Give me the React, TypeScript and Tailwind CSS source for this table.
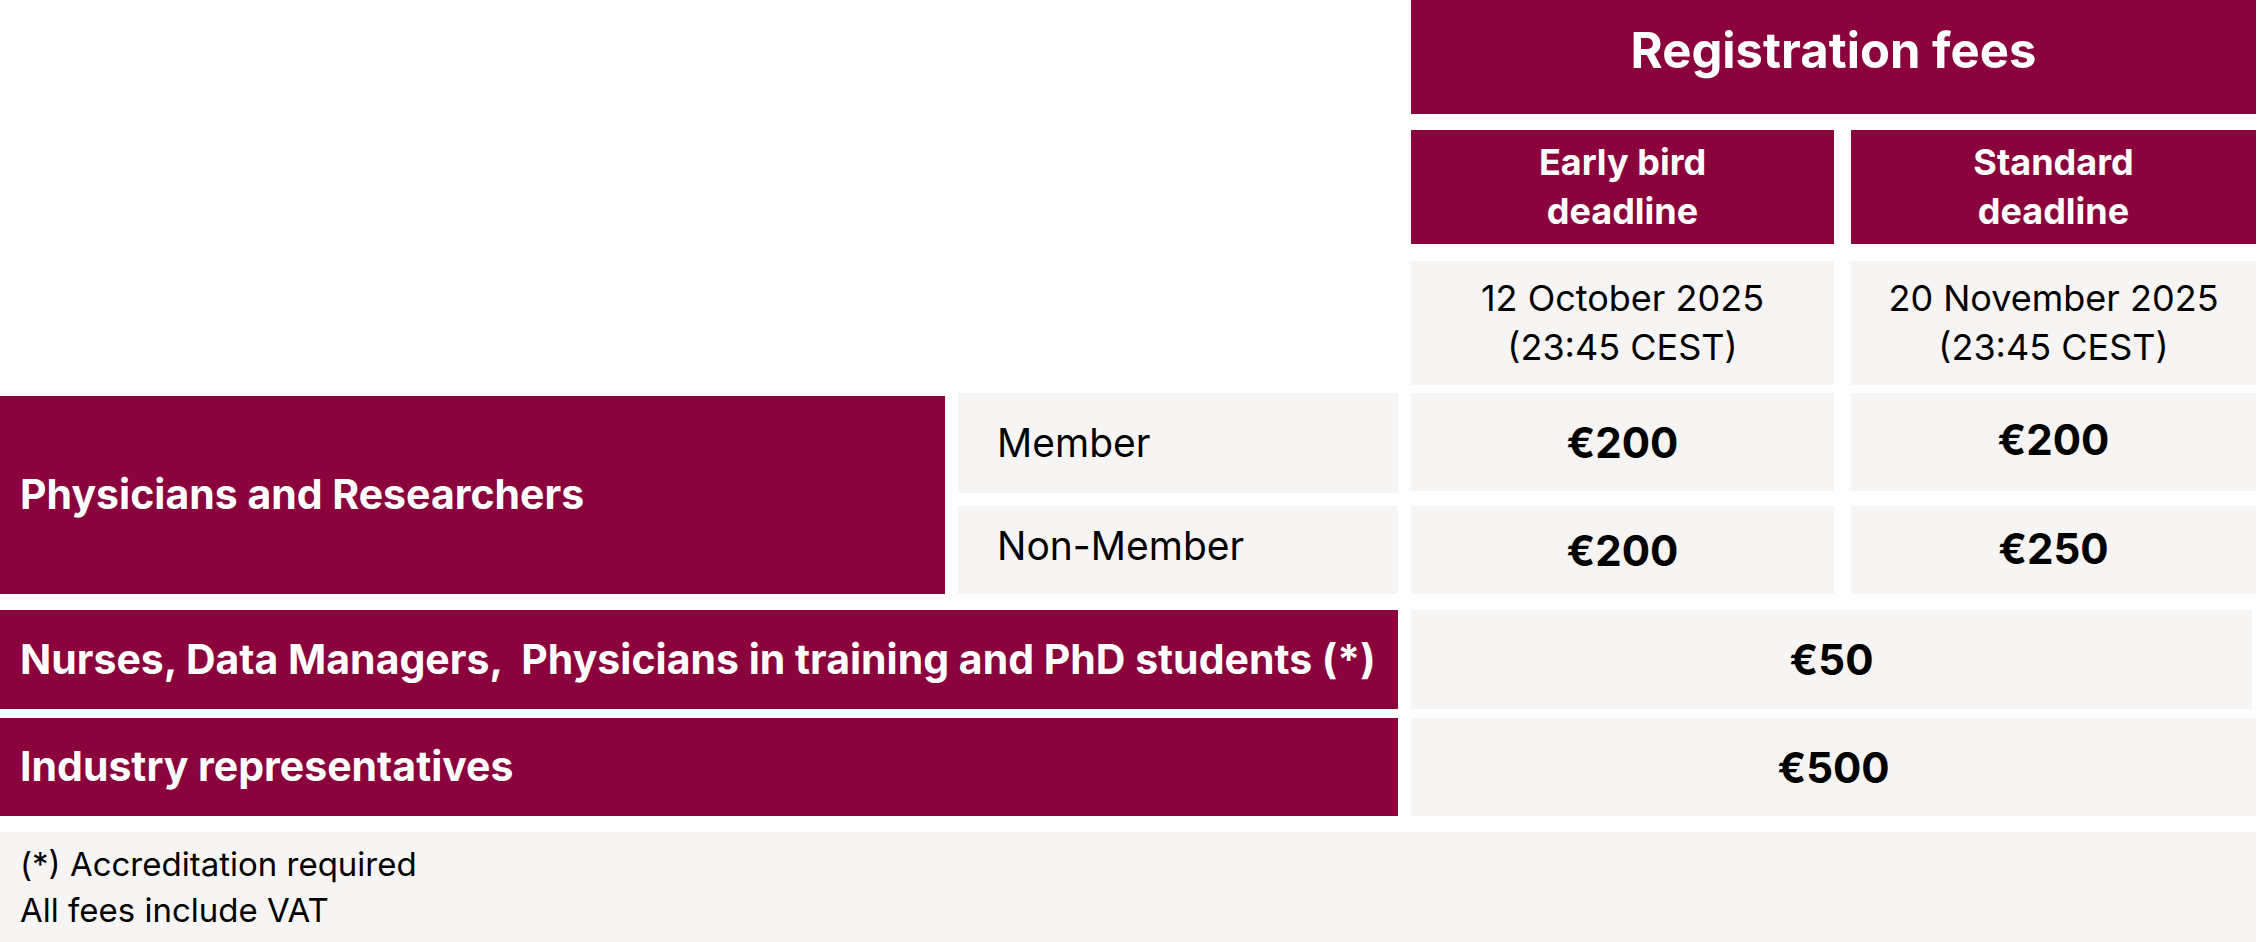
import React from 'react'

const maroon = 'bg-[#8b033c]'
const grey = 'bg-[#f6f5f3]'

function Fee({ value, className = '' }: { value: string; className?: string }) {
    return (
        <div className={`${grey} flex items-center justify-center font-bold text-[42px] text-black ${className}`}>
            {value}
        </div>
    )
}

export default function App() {
    return (
        <div className="w-[2265px] h-[942px] bg-white font-['Inter',sans-serif] text-black overflow-hidden">
            <div className="w-[2256px] flex flex-col">
                {/* header */}
                <div className="flex">
                    <div className="w-[1411px] shrink-0"></div>
                    <div className="flex-1 flex flex-col">
                        <div className={`${maroon} h-[114px] flex items-center justify-center pb-[12px] text-white font-bold text-[49px]`}>
                            Registration fees
                        </div>
                        <div className="flex gap-[17px] mt-[16px] h-[114px]">
                            <div className={`${maroon} w-[423px] flex items-center justify-center text-center text-white font-bold text-[36px] leading-[49px]`}>
                                Early bird<br />deadline
                            </div>
                            <div className={`${maroon} flex-1 flex items-center justify-center text-center text-white font-bold text-[36px] leading-[49px]`}>
                                Standard<br />deadline
                            </div>
                        </div>
                        <div className="flex gap-[17px] mt-[17px] h-[124px]">
                            <div className={`${grey} w-[423px] flex items-center justify-center text-center text-[36px] leading-[49px]`}>
                                12 October 2025<br />(23:45 CEST)
                            </div>
                            <div className={`${grey} flex-1 flex items-center justify-center text-center text-[36px] leading-[49px]`}>
                                20 November 2025<br />(23:45 CEST)
                            </div>
                        </div>
                    </div>
                </div>

                {/* physicians */}
                <div className="flex mt-[8px] h-[201px]">
                    <div className={`${maroon} w-[945px] mt-[3px] flex items-center pl-[20px] text-white font-bold text-[41px]`}>
                        Physicians and Researchers
                    </div>
                    <div className="w-[440px] ml-[13px] flex flex-col gap-[13px]">
                        <div className={`${grey} h-[100px] flex items-center pl-[39px] text-[39px]`}>Member</div>
                        <div className={`${grey} flex-1 flex items-center pl-[39px] pb-[8px] text-[39px]`}>Non-Member</div>
                    </div>
                    <div className="w-[423px] ml-[13px] flex flex-col gap-[15px]">
                        <Fee value="€200" className="h-[98px]" />
                        <Fee value="€200" className="flex-1" />
                    </div>
                    <div className="flex-1 ml-[17px] flex flex-col gap-[15px]">
                        <Fee value="€200" className="h-[98px] pb-[6px]" />
                        <Fee value="€250" className="flex-1 pb-[4px]" />
                    </div>
                </div>

                {/* nurses */}
                <div className="flex mt-[16px] h-[99px]">
                    <div className={`${maroon} w-[1398px] flex items-center pl-[20px] text-white font-bold text-[41px] whitespace-pre`}>
                        Nurses, Data Managers,  Physicians in training and PhD students (*)
                    </div>
                    <Fee value="€50" className="flex-1 ml-[13px] mr-[4px]" />
                </div>

                {/* industry */}
                <div className="flex mt-[9px] h-[98px]">
                    <div className={`${maroon} w-[1398px] flex items-center pl-[20px] text-white font-bold text-[41px]`}>
                        Industry representatives
                    </div>
                    <Fee value="€500" className="flex-1 ml-[13px]" />
                </div>

                {/* footer */}
                <div className={`${grey} mt-[16px] h-[110px] flex flex-col justify-center pl-[20px] text-[33px] leading-[46px]`}>
                    <div>(*) Accreditation required</div>
                    <div>All fees include VAT</div>
                </div>
            </div>
        </div>
    )
}
